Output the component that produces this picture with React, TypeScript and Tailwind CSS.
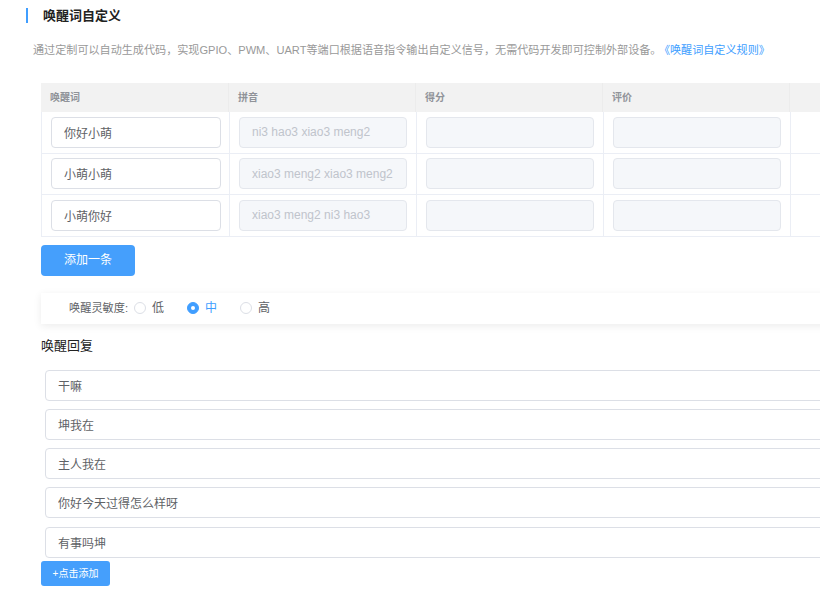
import React from "react";

const font = { fontFamily: '"Liberation Sans", "Noto Sans CJK SC", sans-serif' };

const words = [
  { word: "你好小萌", pinyin: "ni3 hao3 xiao3 meng2" },
  { word: "小萌小萌", pinyin: "xiao3 meng2 xiao3 meng2" },
  { word: "小萌你好", pinyin: "xiao3 meng2 ni3 hao3" },
];

const replies = ["干嘛", "坤我在", "主人我在", "你好今天过得怎么样呀", "有事吗坤"];

const Radio = ({ label, checked }: { label: string; checked?: boolean }) => (
  <label className="flex items-center gap-[6px] cursor-pointer">
    <span
      className={`w-[12px] h-[12px] rounded-full flex items-center justify-center ${
        checked ? "bg-[#409eff] border border-[#409eff]" : "border border-[#dcdfe6] bg-white"
      }`}
    >
      {checked && <span className="w-[4px] h-[4px] rounded-full bg-white" />}
    </span>
    <span className={`text-[12px] ${checked ? "text-[#409eff]" : "text-[#606266]"}`}>{label}</span>
  </label>
);

const Cell = ({ children, last }: { children?: React.ReactNode; last?: boolean }) => (
  <div className={`h-[41.5px] flex items-center px-[9px] border-b border-[#ebeef5] ${last ? "" : "border-r"}`}>
    {children}
  </div>
);

export default function App() {
  return (
    <div className="w-[820px] h-[599px] overflow-hidden bg-white" style={font}>
      <div className="w-[900px]">
        <div className="flex items-center pl-[26px] pt-[8px] h-[15px] box-content">
          <span className="w-[2px] h-[15px] bg-[#409eff]" />
          <span className="ml-[15px] text-[13px] font-bold text-[#222]">唤醒词自定义</span>
        </div>

        <p className="mt-[18px] pl-[33px] text-[11.1px] text-[#999] leading-[18px]">
          通过定制可以自动生成代码，实现GPIO、PWM、UART等端口根据语音指令输出自定义信号，无需代码开发即可控制外部设备。
          <span className="ml-[3px] text-[#409eff] cursor-pointer">《唤醒词自定义规则》</span>
        </p>

        <div className="ml-[41px] mt-[24px] w-[859px]">
          <div className="grid grid-cols-[188px_187px_187px_187px_1fr] bg-[#f2f2f2] h-[29px] text-[10px] text-[#909399] font-bold">
            {["唤醒词", "拼音", "得分", "评价", ""].map((h, i) => (
              <div key={i} className={`flex items-center px-[9px] ${i < 4 ? "border-r border-[#ececec]" : ""}`}>
                {h}
              </div>
            ))}
          </div>
          {words.map((w) => (
            <div key={w.word} className="grid grid-cols-[188px_187px_187px_187px_1fr] border-l border-[#ebeef5]">
              <Cell>
                <input
                  defaultValue={w.word}
                  className="w-[170px] h-[31px] rounded-[4px] border border-[#dcdfe6] px-[12px] text-[12px] text-[#606266] outline-none"
                />
              </Cell>
              <Cell>
                <div className="w-[170px] h-[31px] rounded-[4px] border border-[#e4e7ed] bg-[#f5f7fa] px-[12px] flex items-center text-[12px] text-[#c0c4cc]">
                  {w.pinyin}
                </div>
              </Cell>
              <Cell>
                <div className="w-[170px] h-[31px] rounded-[4px] border border-[#e4e7ed] bg-[#f5f7fa]" />
              </Cell>
              <Cell>
                <div className="w-[170px] h-[31px] rounded-[4px] border border-[#e4e7ed] bg-[#f5f7fa]" />
              </Cell>
              <Cell last />
            </div>
          ))}

          <button className="mt-[8px] w-[94px] h-[31px] rounded-[4px] bg-[#459ffc] text-white text-[12px]">
            添加一条
          </button>

          <div className="mt-[17px] h-[31px] flex items-center pl-[28px] shadow-[0_2px_8px_rgba(0,0,0,0.08)] bg-white">
            <span className="text-[11.2px] text-[#606266] mr-[6px]">唤醒灵敏度:</span>
            <div className="flex items-center gap-[23px]">
              <Radio label="低" />
              <Radio label="中" checked />
              <Radio label="高" />
            </div>
          </div>

          <h3 className="mt-[13px] text-[13px] text-[#222] leading-[18px]">唤醒回复</h3>

          <div className="mt-[15px] ml-[4px] flex flex-col gap-[8.25px]">
            {replies.map((r) => (
              <input
                key={r}
                defaultValue={r}
                className="w-full h-[31px] rounded-[4px] border border-[#dcdfe6] px-[12px] text-[12px] text-[#606266] outline-none"
              />
            ))}
          </div>

          <button className="mt-[3px] w-[69px] h-[25px] rounded-[3px] bg-[#459ffc] text-white text-[10px]">
            +点击添加
          </button>
        </div>
      </div>
    </div>
  );
}
